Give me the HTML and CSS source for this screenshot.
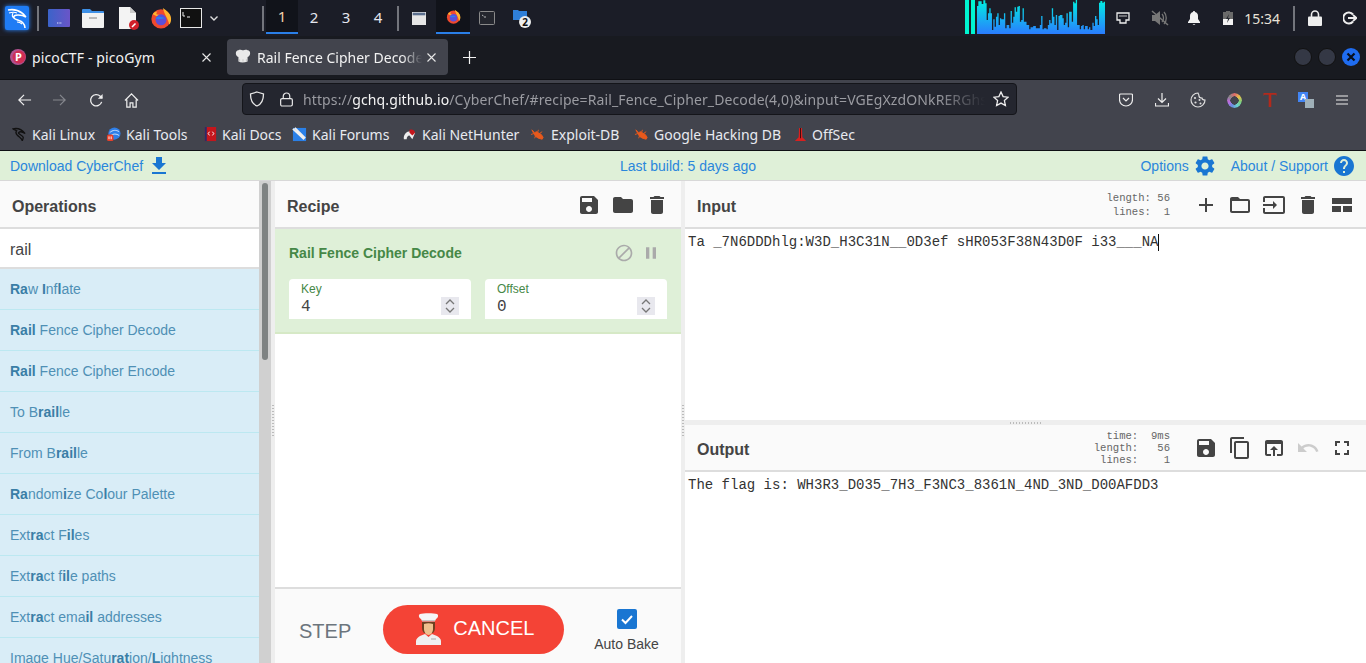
FILE: index.html
```html
<!DOCTYPE html>
<html lang="en">
<head>
    <meta charset="UTF-8">
    <meta name="viewport" content="width=device-width, initial-scale=1.0">
    <title>CyberChef</title>
    <link rel="stylesheet" href="styles.css">
</head>
<body>

<svg class="sprite" aria-hidden="true">
    <symbol id="i-save" viewBox="0 0 24 24"><path d="M17 3H5c-1.11 0-2 .9-2 2v14c0 1.1.89 2 2 2h14c1.1 0 2-.9 2-2V7l-4-4zm-5 16c-1.66 0-3-1.34-3-3s1.34-3 3-3 3 1.34 3 3-1.34 3-3 3zm3-10H5V5h10v4z"/></symbol>
    <symbol id="i-folder" viewBox="0 0 24 24"><path d="M10 4H4c-1.1 0-1.99.9-1.99 2L2 18c0 1.1.9 2 2 2h16c1.1 0 2-.9 2-2V8c0-1.1-.9-2-2-2h-8l-2-2z"/></symbol>
    <symbol id="i-folder-open" viewBox="0 0 24 24"><path d="M20 6h-8l-2-2H4c-1.1 0-1.99.9-1.99 2L2 18c0 1.1.9 2 2 2h16c1.1 0 2-.9 2-2V8c0-1.1-.9-2-2-2zm0 12H4V8h16v10z"/></symbol>
    <symbol id="i-trash" viewBox="0 0 24 24"><path d="M6 19c0 1.1.9 2 2 2h8c1.1 0 2-.9 2-2V7H6v12zM19 4h-3.5l-1-1h-5l-1 1H5v2h14V4z"/></symbol>
    <symbol id="i-add" viewBox="0 0 24 24"><path d="M19 13h-6v6h-2v-6H5v-2h6V5h2v6h6v2z"/></symbol>
    <symbol id="i-input" viewBox="0 0 24 24"><path d="M21 3.01H3c-1.1 0-2 .9-2 2V9h2V4.99h18v14.03H3V15H1v4.01c0 1.1.9 1.98 2 1.98h18c1.1 0 2-.88 2-1.98v-14c0-1.11-.9-2-2-2zM11 16l4-4-4-4v3H1v2h10v3z"/></symbol>
    <symbol id="i-tile" viewBox="0 0 24 24"><path d="M2 5h20v6H2zM2 13h9v6H2zM13 13h9v6h-9z"/></symbol>
    <symbol id="i-copy" viewBox="0 0 24 24"><path d="M16 1H4c-1.1 0-2 .9-2 2v14h2V3h12V1zm3 4H8c-1.1 0-2 .9-2 2v14c0 1.1.9 2 2 2h11c1.1 0 2-.9 2-2V7c0-1.1-.9-2-2-2zm0 16H8V7h11v14z"/></symbol>
    <symbol id="i-open" viewBox="0 0 24 24"><path d="M19 4H5c-1.11 0-2 .9-2 2v12c0 1.1.89 2 2 2h4v-2H5V8h14v10h-4v2h4c1.1 0 2-.9 2-2V6c0-1.1-.89-2-2-2zm-7 6l-4 4h3v6h2v-6h3l-4-4z"/></symbol>
    <symbol id="i-undo" viewBox="0 0 24 24"><path d="M12.5 8c-2.65 0-5.05.99-6.9 2.6L2 7v9h9l-3.62-3.62c1.39-1.16 3.16-1.88 5.12-1.88 3.54 0 6.55 2.31 7.6 5.5l2.37-.78C21.08 11.03 17.15 8 12.5 8z"/></symbol>
    <symbol id="i-full" viewBox="0 0 24 24"><path d="M7 14H5v5h5v-2H7v-3zm-2-4h2V7h3V5H5v5zm12 7h-3v2h5v-5h-2v3zM14 5v2h3v3h2V5h-5z"/></symbol>
    <symbol id="i-gear" viewBox="0 0 24 24"><path d="M19.14 12.94c.04-.3.06-.61.06-.94 0-.32-.02-.64-.07-.94l2.03-1.58c.18-.14.23-.41.12-.61l-1.92-3.32c-.12-.22-.37-.29-.59-.22l-2.39.96c-.5-.38-1.03-.7-1.62-.94l-.36-2.54c-.04-.24-.24-.41-.48-.41h-3.84c-.24 0-.43.17-.47.41l-.36 2.54c-.59.24-1.13.57-1.62.94l-2.39-.96c-.22-.08-.47 0-.59.22L2.74 8.87c-.12.21-.08.47.12.61l2.03 1.58c-.05.3-.09.63-.09.94s.02.64.07.94l-2.03 1.58c-.18.14-.23.41-.12.61l1.92 3.32c.12.22.37.29.59.22l2.39-.96c.5.38 1.03.7 1.62.94l.36 2.54c.05.24.24.41.48.41h3.84c.24 0 .44-.17.47-.41l.36-2.54c.59-.24 1.13-.56 1.62-.94l2.39.96c.22.08.47 0 .59-.22l1.92-3.32c.12-.22.07-.47-.12-.61l-2.01-1.58zM12 15.6c-1.98 0-3.6-1.62-3.6-3.6s1.62-3.6 3.6-3.6 3.6 1.62 3.6 3.6-1.62 3.6-3.6 3.6z"/></symbol>
    <symbol id="i-help" viewBox="0 0 24 24"><path d="M12 2C6.48 2 2 6.48 2 12s4.48 10 10 10 10-4.48 10-10S17.52 2 12 2zm1 17h-2v-2h2v2zm2.07-7.75l-.9.92C13.45 12.9 13 13.5 13 15h-2v-.5c0-1.1.45-2.1 1.17-2.83l1.24-1.26c.37-.36.59-.86.59-1.41 0-1.1-.9-2-2-2s-2 .9-2 2H8c0-2.21 1.79-4 4-4s4 1.79 4 4c0 .88-.36 1.68-.93 2.25z"/></symbol>
    <symbol id="i-download" viewBox="0 0 24 24"><path d="M19 9h-4V3H9v6H5l7 7 7-7zM5 18v2h14v-2H5z"/></symbol>
    <symbol id="i-block" viewBox="0 0 24 24"><path d="M12 2C6.48 2 2 6.48 2 12s4.48 10 10 10 10-4.48 10-10S17.52 2 12 2zM4 12c0-4.42 3.58-8 8-8 1.85 0 3.55.63 4.9 1.69L5.69 16.9C4.63 15.55 4 13.85 4 12zm8 8c-1.85 0-3.55-.63-4.9-1.69L18.31 7.1C19.37 8.45 20 10.15 20 12c0 4.42-3.58 8-8 8z"/></symbol>
    <symbol id="i-pause" viewBox="0 0 24 24"><path d="M6 19h4V5H6v14zm8-14v14h4V5h-4z"/></symbol>
    <symbol id="i-spin" viewBox="0 0 18 18"><path d="M5 7l4-4 4 4M5 11l4 4 4-4" fill="none" stroke="#777" stroke-width="1.3"/></symbol>
    <symbol id="i-tabx" viewBox="0 0 9 9"><path d="M.5.5l8 8M8.500.5l-8 8" stroke="#e8e8e8" stroke-width="1.100"/></symbol>
    <symbol id="i-firefox" viewBox="0 0 24 24">
        <circle cx="12" cy="13" r="10.5" fill="#f0492e"/>
        <path d="M14 1c4 3 9 6 9 12 0 3-1 5-2 6-1-6-5-10-7-18z" fill="#ffb52e"/>
        <path d="M3 8c1-2 3-3 5-3-1 1-1 2-1 3l5 1-3 2-6-3z" fill="#ffb52e"/>
        <circle cx="12" cy="14" r="6" fill="#5c4fd8"/>
        <path d="M6 12c3-2 8-2 11 1-2-1-3 0-5 0s-4 1-6-1z" fill="#2d7ff0"/>
    </symbol>
    <symbol id="i-bug" viewBox="0 0 16 16"><path d="M2 3l3 3 2-1 5 3 2 3-1 2-4-1-3-2-2-3zM1 8l3-1M5 12l1-3M9 3l-1 3M13 5l-3 2" fill="#e8591c" stroke="#e8591c" stroke-width="1"/></symbol>
</svg>

<div class="taskbar">
    <svg class="tb-kali" viewBox="0 0 24 24">
        <rect width="24" height="24" rx="2" fill="#1f7cf5"/>
        <path d="M3 4c5-1 10 0 14 3 2 1 3 3 4 4-3-2-6-2-8-2-3 0-5 1-4 3 1 2 7 2 9 5 1 1 2 3 2 5" fill="none" stroke="#fff" stroke-width="1.600"/>
        <path d="M4 7c3-1 6-1 8 0M17 18c-1-1-3-2-5-2M9 12c-2-1-2-3-1-5" fill="none" stroke="#fff" stroke-width="1.100"/>
    </svg>
    <span class="tb-sep tb-sep1"></span>
    <svg class="tb-desktop" viewBox="0 0 22 18"><defs><linearGradient id="deskgrad" x1="0" x2="1"><stop offset="0" stop-color="#3b63c9"/><stop offset="1" stop-color="#6a55c8"/></linearGradient></defs><rect width="22" height="18" rx="1" fill="url(#deskgrad)"/><path d="M9 14h5" stroke="#dfe4ff" stroke-dasharray="1 .6" stroke-width="1.2"/></svg>
    <svg class="tb-folder" viewBox="0 0 22 20"><path d="M0 2a1 1 0 0 1 1-1h7l2 2h11a1 1 0 0 1 1 1v2H0z" fill="#3d8fe6"/><path d="M0 5h22v14a1 1 0 0 1-1 1H1a1 1 0 0 1-1-1z" fill="#f1f1f1"/><rect x="7" y="9" width="8" height="2" fill="#b9b9b9"/></svg>
    <svg class="tb-doc" viewBox="0 0 21 23"><path d="M1 0h11l6 6v16H1z" fill="#f3f3f3"/><path d="M12 0l6 6h-6z" fill="#c9c9c9"/><circle cx="16" cy="18" r="5" fill="#d1202a"/><path d="M14 20l3.5-3.5" stroke="#fff" stroke-width="1.6"/></svg>
    <svg class="tb-fox"><use href="#i-firefox"/></svg>
    <svg class="tb-term" viewBox="0 0 22 20"><rect x=".5" y=".5" width="21" height="19" fill="#111" stroke="#e8e8e8"/><path d="M3 4v4M3 8h2M7 9h3" stroke="#eee" stroke-width="1"/></svg>
    <svg class="tb-chev" viewBox="0 0 8 5"><path d="M.5.5L4 4 7.5.5" fill="none" stroke="#ddd" stroke-width="1.4"/></svg>
    <span class="tb-sep tb-sep2"></span>
    <div class="workspaces">
        <span class="ws ws-on">1</span>
        <span class="ws">2</span>
        <span class="ws">3</span>
        <span class="ws">4</span>
    </div>
    <span class="tb-sep tb-sep3"></span>
    <svg class="tb-win" viewBox="0 0 14 13"><rect width="14" height="13" fill="#e6e6e6"/><rect x=".7" y=".7" width="12.6" height="2.6" fill="#5b6f8f"/></svg>
    <div class="tb-active"><svg class="tb-fox-sm"><use href="#i-firefox"/></svg></div>
    <svg class="tb-term-sm" viewBox="0 0 16 14"><rect x=".5" y=".5" width="15" height="13" rx="1" fill="#24262e" stroke="#8a8a8a"/><path d="M3 4l1.5 1M5 6h2" stroke="#ddd" stroke-width=".8"/></svg>
    <div class="tb-files">
        <svg viewBox="0 0 14 11"><path d="M0 1h5l1 1h8v9H0z" fill="#2f7fd8"/></svg>
        <span class="tb-badge">2</span>
    </div>

    <div class="tb-right">
        <span class="cpu-bar"></span>
        <span class="cpu-bar"></span>
        <svg class="net-graph" viewBox="51 0 385 102" preserveAspectRatio="none">
            <defs><linearGradient id="netgrad" x1="0" x2="0" y1="0" y2="1"><stop offset="0" stop-color="#00f0e0"/><stop offset="1" stop-color="#2a7cff"/></linearGradient></defs>
            <path fill="url(#netgrad)" d="M51 102V18H55V4H65V12H70V1H76V10H80V60H84V40H88V25H92V40H96V90H100V58H104V80H108V50H112V40H116V75H120V55H124V58H132V40H136V85H140V75H148V85H152V33H156V68H160V50H164V22H168V35H172V20H176V18H180V65H184V60H188V25H192V65H200V75H208V88H212V82H220V78H228V85H240V75H244V48H248V88H252V85H260V88H264V75H268V60H272V70H276V25H280V50H284V75H288V45H292V90H296V48H300V45H308V55H312V75H316V68H320V40H324V82H328V35H336V65H340V5H344V10H348V0H352V75H360V88H364V78H368V75H372V88H376V78H384V88H388V82H392V90H398V68H402V78H406V48H410V58H414V75H418V8H422V3H428V8H432V5H436V102Z"/>
        </svg>
        <svg class="tr-eth" viewBox="0 0 14 12"><path d="M1 1h12v7h-3v3H4V8H1z" fill="none" stroke="#eee" stroke-width="1.3"/><path d="M4 3v2M6 3v2M8 3v2M10 3v2" stroke="#eee" stroke-width=".8"/></svg>
        <svg class="tr-mute" viewBox="0 0 18 16"><path d="M1 5h3l5-4v14l-5-4H1z" fill="#777"/><path d="M11 4c2 2 2 6 0 8M13 2c3 3 3 9 0 12" fill="none" stroke="#777" stroke-width="1.3"/><path d="M1 1l16 14" stroke="#777" stroke-width="1.5"/></svg>
        <svg class="tr-bell" viewBox="0 0 14 14"><path d="M7 0c.8 0 1 .5 1 1 2 .5 3 2 3 4v3l2 3v1H1v-1l2-3V5c0-2 1-3.500 3-4 0-.5.2-1 1-1z" fill="#f2f2f2"/><path d="M5.500 13h3L7 14z" fill="#f2f2f2"/></svg>
        <svg class="tr-batt" viewBox="0 0 10 14"><path d="M3 0h4v1h3v13H0V1h3z" fill="#6a6a6a"/><path d="M0 8h10v6H0z" fill="#f2f2f2"/><path d="M6 3L3 8h2l-1 4 3-5H5z" fill="#26282f"/></svg>
        <span class="clock">15:34</span>
        <span class="tb-sep tb-sep4"></span>
        <svg class="tr-lock" viewBox="0 0 14 16"><path d="M3.500 7V4.500a3.500 3.500 0 0 1 7 0V7" fill="none" stroke="#eee" stroke-width="1.600"/><rect y="6.500" width="14" height="9.500" rx="1" fill="#eee"/></svg>
        <svg class="tr-exit" viewBox="0 0 14 14"><path d="M10 3.500A5.500 5.500 0 1 0 10 10.500" fill="none" stroke="#eee" stroke-width="2"/><path d="M5 7h8M10 4l3.500 3L10 10" fill="none" stroke="#eee" stroke-width="1.800"/></svg>
    </div>
</div>

<div class="tabbar">
    <div class="tab">
        <svg class="tab-icon" viewBox="0 0 16 16"><circle cx="8" cy="8" r="8" fill="#b0508e"/><circle cx="9" cy="8" r="6.500" fill="#cf2f55"/><text x="8.500" y="12" class="tab-p">P</text></svg>
        <span class="tab-title">picoCTF - picoGym</span>
        <svg class="tab-x"><use href="#i-tabx"/></svg>
    </div>
    <div class="tab tab-on">
        <svg class="tab-icon" viewBox="0 0 14 14"><path d="M3 1c1-1 3 0 4 0s3-1 4 0c3 0 3 5 0 6v4c-3 1-6 1-8 0V7C0 6 0 1 3 1z" fill="#e9e9e9"/><path d="M4 9v2M7 9v2M10 9v2" stroke="#bbb" stroke-width=".7"/></svg>
        <span class="tab-title tab-fade">Rail Fence Cipher Decoder</span>
        <svg class="tab-x"><use href="#i-tabx"/></svg>
    </div>
    <svg class="tab-new" viewBox="0 0 13 13"><path d="M6.500 0v13M0 6.500h13" stroke="#f2f2f2" stroke-width="1.200"/></svg>
    <div class="win-btns">
        <span class="win-btn"></span>
        <span class="win-btn"></span>
        <span class="win-btn win-close">
            <svg viewBox="0 0 10 10"><path d="M1.500 1.500l7 7M8.500 1.500l-7 7" stroke="#08101f" stroke-width="2.200"/></svg>
        </span>
    </div>
</div>

<div class="toolbar">
    <svg class="nav nav-back" viewBox="0 0 16 14"><path d="M15 7H2M7.500 1.500L2 7l5.500 5.500" fill="none" stroke="#eee" stroke-width="1.300"/></svg>
    <svg class="nav nav-fwd" viewBox="0 0 16 14"><path d="M1 7h13M8.500 1.500L14 7l-5.500 5.500" fill="none" stroke="#85878d" stroke-width="1.300"/></svg>
    <svg class="nav nav-reload" viewBox="0 0 16 16"><path d="M13.500 9.500A6 6 0 1 1 12 3.500l2 2" fill="none" stroke="#eee" stroke-width="1.400"/><path d="M14.500 1v5h-5z" fill="#eee"/></svg>
    <svg class="nav nav-home" viewBox="0 0 16 16"><path d="M1 8l7-7 7 7M3 7v8h3.500v-4.500h3V15H13V7" fill="none" stroke="#eee" stroke-width="1.300"/></svg>
    <div class="urlbar">
        <svg class="url-shield" viewBox="0 0 16 16"><path d="M8 1l6.500 2c0 6-1.500 10-6.500 12C3 13 1.500 9 1.500 3z" fill="none" stroke="#e8e8e8" stroke-width="1.300"/></svg>
        <svg class="url-lock" viewBox="0 0 14 16"><path d="M3.500 7V4.500a3.500 3.500 0 0 1 7 0V7" fill="none" stroke="#e8e8e8" stroke-width="1.300"/><rect x=".7" y="7" width="12.600" height="8" rx="1.500" fill="none" stroke="#e8e8e8" stroke-width="1.300"/></svg>
        <span class="url-text">https://<b>gchq.github.io</b>/CyberChef/#recipe=Rail_Fence_Cipher_Decode(4,0)&amp;input=VGEgXzdONkRERGhsZzpX</span>
        <svg class="url-star" viewBox="0 0 16 16"><path d="M8 1l2.100 4.600 5 .6-3.700 3.400 1 5L8 12.100 3.600 14.600l1-5L.9 6.200l5-.6z" fill="none" stroke="#eee" stroke-width="1.300"/></svg>
    </div>
    <div class="tool-icons">
        <svg class="ti-pocket" viewBox="0 0 14 14"><path d="M1.500 1h11a1 1 0 0 1 1 1v4.500a6.500 6.500 0 0 1-13 0V2a1 1 0 0 1 1-1z" fill="none" stroke="#eee" stroke-width="1.200"/><path d="M4 5l3 3 3-3" fill="none" stroke="#eee" stroke-width="1.200"/></svg>
        <svg class="ti-dl" viewBox="0 0 14 14"><path d="M7 0v9M3 5.500L7 9.500l4-4M.5 10v3h13v-3" fill="none" stroke="#eee" stroke-width="1.200"/></svg>
        <svg class="ti-cookie" viewBox="0 0 16 16"><path d="M8 1a7 7 0 1 0 7 7c-2 0-3-1-3-2-2 0-3-1-3-2 0-1-.500-2-1-3z" fill="none" stroke="#ddd" stroke-width="1.200"/><circle cx="5" cy="6" r="1.100" fill="#ddd"/><circle cx="5.500" cy="10.500" r="1.100" fill="#ddd"/><circle cx="9.500" cy="8" r="1" fill="#ddd"/><circle cx="10.500" cy="11.500" r="1" fill="#ddd"/></svg>
        <span class="ti-ring"></span>
        <svg class="ti-t" viewBox="0 0 14 16"><path d="M.5 1h13v3l-1-1.300H8.300V15H5.700V2.700H1.500L.5 4z" fill="#b22a1c"/></svg>
        <span class="ti-trans">
            <span class="ti-trans-a">A</span>
            <span class="ti-trans-b"></span>
        </span>
        <svg class="ti-menu" viewBox="0 0 12 10"><path d="M0 1h12M0 5h12M0 9h12" stroke="#eee" stroke-width="1.200"/></svg>
    </div>
</div>

<div class="bookmarks">
    <div class="bm"><svg class="bm-icon" viewBox="0 0 16 16"><path d="M1 2c4-1 9 0 13 5-3-2-6-2-7-1s4 3 5 5c0 2-1 3-1 4 0-3-3-4-5-6S4 5 5 4C3 3 2 3 1 2z" fill="none" stroke="#111" stroke-width="1.400"/></svg>Kali Linux</div>
    <div class="bm"><svg class="bm-icon" viewBox="0 0 16 16"><circle cx="9" cy="7" r="6.500" fill="#2f7fe8"/><path d="M4 6c3-3 7-3 10-1M5 9c3-2 6-2 9 0" stroke="#cfe4ff" fill="none"/><rect x="1" y="8" width="7" height="7" rx="2" fill="#e8402a"/><path d="M3.200 10v3M5.500 10v3" stroke="#fff"/></svg>Kali Tools</div>
    <div class="bm bm-tight"><svg class="bm-icon" viewBox="0 0 14 16"><rect x="1" width="12" height="15" fill="#c4161c"/><rect x="1" width="2" height="15" fill="#2b2b6b"/><path d="M6 5L4.500 7 6 9M9 5l1.500 2L9 9" stroke="#fff" fill="none"/></svg>Kali Docs</div>
    <div class="bm"><svg class="bm-icon" viewBox="0 0 16 16"><path d="M1 1h14v14H1z" fill="#2a80e8"/><path d="M1 2l12 11M3 1l11 11" stroke="#eee" stroke-width="2"/></svg>Kali Forums</div>
    <div class="bm"><svg class="bm-icon" viewBox="0 0 16 16"><path d="M2 13C1 6 8 2 14 6L11 13 8 9c-2 0-3 2-3 4z" fill="#eee"/><path d="M8 3c3-1 5 0 6 3l-3 3-3-3z" fill="#c4161c"/></svg>Kali NetHunter</div>
    <div class="bm bm-wide"><svg class="bm-icon"><use href="#i-bug"/></svg>Exploit-DB</div>
    <div class="bm"><svg class="bm-icon"><use href="#i-bug"/></svg>Google Hacking DB</div>
    <div class="bm bm-tight"><svg class="bm-icon" viewBox="0 0 14 16"><path d="M5.500 1h3l.5 10 4 4H1l4-4z" fill="#d8201f"/><path d="M6.500 1h1v11h-1z" fill="#3a0a0a"/></svg>OffSec</div>
</div>

<div class="banner">
    <a class="banner-left">Download CyberChef <svg class="ic-banner-dl"><use href="#i-download"/></svg></a>
    <span class="banner-mid">Last build: 5 days ago</span>
    <div class="banner-right">
        <a>Options <svg class="ic-banner"><use href="#i-gear"/></svg></a>
        <a>About / Support <svg class="ic-banner"><use href="#i-help"/></svg></a>
    </div>
</div>

<div class="workspace">
    <div class="ops">
        <div class="ops-inner">
            <div class="pane-head"><span class="pane-title">Operations</span></div>
            <div class="search">rail</div>
            <ul class="op-list">
                <li><b>Ra</b>w <b>I</b>nf<b>l</b>ate</li>
                <li><b>Rail</b> Fence Cipher Decode</li>
                <li><b>Rail</b> Fence Cipher Encode</li>
                <li>To B<b>rail</b>le</li>
                <li>From B<b>rail</b>le</li>
                <li><b>Ra</b>ndom<b>i</b>ze Co<b>l</b>our Palette</li>
                <li>Ext<b>ra</b>ct F<b>il</b>es</li>
                <li>Ext<b>ra</b>ct f<b>il</b>e paths</li>
                <li>Ext<b>ra</b>ct ema<b>il</b> addresses</li>
                <li>Image Hue/Satu<b>rat</b>ion/<b>L</b>ightness</li>
            </ul>
        </div>
        <div class="scrollbar"><span class="thumb"></span></div>
    </div>
    <div class="gutter-v"><span class="dots-v"></span></div>

    <div class="recipe">
        <div class="pane-head">
            <span class="pane-title">Recipe</span>
            <div class="head-icons">
                <svg class="hi"><use href="#i-save"/></svg>
                <svg class="hi"><use href="#i-folder"/></svg>
                <svg class="hi"><use href="#i-trash"/></svg>
            </div>
        </div>
        <div class="op-card">
            <div class="card-top">
                <span class="card-title">Rail Fence Cipher Decode</span>
                <svg class="card-ic"><use href="#i-block"/></svg>
                <svg class="card-ic card-pause"><use href="#i-pause"/></svg>
            </div>
            <div class="card-fields">
                <div class="field">
                    <label>Key</label>
                    <div class="field-val">4</div>
                    <svg class="spin"><use href="#i-spin"/></svg>
                </div>
                <div class="field">
                    <label>Offset</label>
                    <div class="field-val">0</div>
                    <svg class="spin"><use href="#i-spin"/></svg>
                </div>
            </div>
        </div>
        <div class="recipe-empty"></div>
        <div class="bake">
            <span class="step">STEP</span>
            <div class="cancel">
                <svg class="chef" viewBox="0 0 25 32">
                    <path d="M4 1c3-1 14-1 17 0 2 1 1 4-1 5l-1 2H6L5 6C3 5 2 2 4 1z" fill="#f6f6f6"/>
                    <path d="M6 7h13v1.500H6z" fill="#c8c8c8"/>
                    <path d="M6 9h13v6c0 2-1 4-2 5H8c-1-1-2-3-2-5z" fill="#6e4020"/>
                    <path d="M8 11c3-1 6-1 9 0v5c0 3-2 6-4.500 6S8 19 8 16z" fill="#eec08e"/>
                    <path d="M9 21l3.500 3 3.500-3 5 2c2 1 4 3 4 5v4H0v-4c0-2 2-4 4-5z" fill="#f0f0f0"/>
                    <path d="M15 26h5" stroke="#aaa"/>
                </svg>
                <span>CANCEL</span>
            </div>
            <div class="autobake">
                <span class="check"><svg viewBox="0 0 20 20"><path d="M5 10.500l3.500 3.500L15 7" fill="none" stroke="#fff" stroke-width="2"/></svg></span>
                <span class="autobake-label">Auto Bake</span>
            </div>
        </div>
    </div>
    <div class="gutter-v"><span class="dots-v"></span></div>

    <div class="io">
        <div class="io-pane io-pane-in">
            <div class="pane-head">
                <span class="pane-title">Input</span>
                <pre class="stats">length: 56
 lines:  1</pre>
                <div class="head-icons head-icons-io">
                    <svg class="hi"><use href="#i-add"/></svg>
                    <svg class="hi"><use href="#i-folder-open"/></svg>
                    <svg class="hi"><use href="#i-input"/></svg>
                    <svg class="hi"><use href="#i-trash"/></svg>
                    <svg class="hi"><use href="#i-tile"/></svg>
                </div>
            </div>
            <div class="io-text">Ta _7N6DDDhlg:W3D_H3C31N__0D3ef sHR053F38N43D0F i33___NA<span class="caret"></span></div>
        </div>
        <div class="gutter-h"><span class="dots-h"></span></div>
        <div class="io-pane">
            <div class="pane-head pane-head-out">
                <span class="pane-title">Output</span>
                <pre class="stats stats-out">  time:  9ms
length:   56
 lines:    1</pre>
                <div class="head-icons head-icons-io">
                    <svg class="hi"><use href="#i-save"/></svg>
                    <svg class="hi"><use href="#i-copy"/></svg>
                    <svg class="hi"><use href="#i-open"/></svg>
                    <svg class="hi hi-off"><use href="#i-undo"/></svg>
                    <svg class="hi"><use href="#i-full"/></svg>
                </div>
            </div>
            <div class="io-text">The flag is: WH3R3_D035_7H3_F3NC3_8361N_4ND_3ND_D00AFDD3</div>
        </div>
    </div>
</div>

</body>
</html>
```

FILE: styles.css
```css
* {
    box-sizing: border-box;
}

html, body {
    margin: 0;
    height: 663px;
    overflow: hidden;
}

body {
    font-family: "Liberation Sans", Arial, sans-serif;
    background-color: #fff;
    color: #444;
}

.sprite {
    display: none;
}

/* desktop panel */
.taskbar {
    height: 36px;
    display: flex;
    align-items: center;
    background-color: #1b1d27;
    font-family: "Noto Sans", sans-serif;
}

.taskbar svg {
    flex: none;
}

.tb-kali { width: 24px; height: 24px; margin-left: 5px; filter: drop-shadow(0 0 2px #2a86ff); }
.tb-sep { width: 2px; height: 25px; background-color: #73757c; flex: none; }
.tb-sep1 { margin-left: 8px; }
.tb-desktop { width: 22px; height: 18px; margin-left: 9px; }
.tb-folder { width: 22px; height: 20px; margin-left: 12px; }
.tb-doc { width: 21px; height: 23px; margin-left: 14px; }
.tb-fox { width: 22px; height: 22px; margin-left: 11px; }
.tb-term { width: 22px; height: 20px; margin-left: 8px; }
.tb-chev { width: 8px; height: 5px; margin-left: 8px; }
.tb-sep2 { margin-left: 44px; }

.workspaces {
    display: flex;
    margin-left: 2px;
    height: 36px;
}

.ws {
    width: 32px;
    height: 34px;
    display: flex;
    align-items: center;
    justify-content: center;
    font-size: 15px;
    color: #e4e6ee;
}

.ws-on {
    background-color: #11131a;
    border-bottom: 2px solid #2a7fe8;
    color: #f2d3ad;
}

.tb-sep3 { margin-left: 3px; }
.tb-win { width: 14px; height: 13px; margin-left: 13px; }

.tb-active {
    width: 34px;
    height: 34px;
    margin: 0 0 2px 10px;
    display: flex;
    align-items: center;
    justify-content: center;
    background-color: #11131a;
    border-bottom: 2px solid #2a7fe8;
}

.tb-fox-sm { width: 15px; height: 15px; }
.tb-term-sm { width: 16px; height: 14px; margin-left: 9px; }

.tb-files {
    position: relative;
    margin-left: 18px;
    width: 18px;
    height: 19px;
}

.tb-files svg {
    width: 14px;
    height: 11px;
    display: block;
}

.tb-badge {
    position: absolute;
    right: 0;
    bottom: 0;
    width: 12px;
    height: 12px;
    border-radius: 50%;
    background-color: #eee;
    color: #111;
    font-size: 10px;
    font-weight: 700;
    line-height: 12px;
    text-align: center;
}

.tb-right {
    margin-left: auto;
    display: flex;
    align-items: center;
    height: 36px;
}

.cpu-bar {
    width: 4px;
    height: 34px;
    margin-right: 2px;
    margin-bottom: 2px;
    background-color: #00f5d0;
}

.net-graph { width: 128px; height: 34px; margin-bottom: 2px; }
.tr-eth { width: 14px; height: 12px; margin-left: 11px; }
.tr-mute { width: 18px; height: 16px; margin-left: 21px; }
.tr-bell { width: 14px; height: 14px; margin-left: 18px; }
.tr-batt { width: 10px; height: 14px; margin-left: 22px; }
.clock { margin-left: 11px; font-size: 14px; color: #e8e2d8; }
.tb-sep4 { margin-left: 13px; }
.tr-lock { width: 14px; height: 16px; margin-left: 13px; }
.tr-exit { width: 14px; height: 14px; margin: 0 9px 0 21px; }

/* browser tabs */
.tabbar {
    height: 43px;
    display: flex;
    align-items: flex-start;
    padding-top: 3px;
    background-color: #181a20;
    font-family: "Noto Sans", sans-serif;
    font-size: 14px;
    letter-spacing: .12px;
    color: #f2f2f2;
}

.tab {
    width: 221px;
    height: 36px;
    display: flex;
    align-items: center;
    padding-left: 10px;
    border-radius: 4px;
    position: relative;
}

.tab:first-child {
    width: 219px;
    margin-right: 8px;
}

.tab-on {
    background-color: #42444d;
    padding-left: 8px;
}

.tab-icon {
    width: 16px;
    height: 16px;
    flex: none;
}

.tab-title {
    margin-left: 6px;
    white-space: nowrap;
    overflow: hidden;
}

.tab-fade {
    width: 165px;
    letter-spacing: 0;
    -webkit-mask-image: linear-gradient(to right, #000 88%, transparent);
    mask-image: linear-gradient(to right, #000 88%, transparent);
}

.tab-p {
    font-family: "Noto Sans", sans-serif;
    font-size: 11px;
    font-weight: 700;
    fill: #fff;
    text-anchor: middle;
}

.tab-x {
    position: absolute;
    right: 12px;
    top: 14px;
    width: 9px;
    height: 9px;
}

.tab:first-child .tab-x {
    right: 8px;
}

.tab-new {
    width: 13px;
    height: 13px;
    margin: 12px 0 0 15px;
}

.win-btns {
    margin-left: auto;
    margin-right: 6px;
    margin-top: 9px;
    display: flex;
    gap: 6px;
}

.win-btn {
    width: 18px;
    height: 18px;
    border-radius: 50%;
    background-color: #343845;
    border: 1px solid #111;
    display: flex;
    align-items: center;
    justify-content: center;
}

.win-close {
    background-color: #1f6cf0;
    border: none;
}

.win-close svg {
    width: 10px;
    height: 10px;
}

/* browser toolbar */
.toolbar {
    height: 41px;
    display: flex;
    align-items: center;
    background-color: #42444d;
    border-top: 1px solid #0f1014;
    font-family: "Noto Sans", sans-serif;
}

.nav { flex: none; }
.nav-back { width: 15px; height: 14px; margin-left: 17px; }
.nav-fwd { width: 15px; height: 14px; margin-left: 20px; }
.nav-reload { width: 15px; height: 15px; margin-left: 22px; }
.nav-home { width: 15px; height: 15px; margin-left: 20px; }

.urlbar {
    width: 775px;
    height: 32px;
    margin: 0 0 2px 103px;
    display: flex;
    align-items: center;
    background-color: #24262f;
    border: 1px solid #14151a;
    border-radius: 4px;
    font-size: 14px;
    letter-spacing: .12px;
    color: #9a9ba1;
}

.url-shield { width: 16px; height: 16px; margin-left: 6px; flex: none; }
.url-lock { width: 13px; height: 15px; margin-left: 15px; flex: none; }

.url-text {
    width: 682px;
    margin-left: 10px;
    white-space: nowrap;
    overflow: hidden;
    flex: none;
    -webkit-mask-image: linear-gradient(to right, #000 93%, transparent);
    mask-image: linear-gradient(to right, #000 93%, transparent);
}

.url-text b {
    font-weight: 400;
    color: #f4f4f4;
}

.url-star { width: 16px; height: 16px; margin-left: 8px; flex: none; }

.tool-icons {
    display: flex;
    align-items: center;
    margin-left: 102px;
}

.ti-pocket { width: 14px; height: 14px; }
.ti-dl { width: 14px; height: 14px; margin-left: 22px; }
.ti-cookie { width: 16px; height: 16px; margin-left: 21px; }

.ti-ring {
    width: 15px;
    height: 15px;
    margin-left: 21px;
    border-radius: 50%;
    background: conic-gradient(#e06a6a, #e6c04a, #7ed07e, #6ad0d0, #6a8ae0, #c06ae0, #888, #e06a6a);
    -webkit-mask-image: radial-gradient(circle, transparent 38%, #000 40%);
    mask-image: radial-gradient(circle, transparent 38%, #000 40%);
}

.ti-t { width: 14px; height: 16px; margin-left: 21px; }

.ti-trans {
    position: relative;
    width: 16px;
    height: 16px;
    margin-left: 21px;
}

.ti-trans-a {
    position: absolute;
    left: 0;
    top: 0;
    width: 10px;
    height: 10px;
    background-color: #4285f4;
    color: #fff;
    font-size: 9px;
    font-weight: 700;
    line-height: 10px;
    text-align: center;
}

.ti-trans-b {
    position: absolute;
    right: 0;
    bottom: 0;
    width: 9px;
    height: 9px;
    background-color: #9fb0b8;
}

.ti-menu { width: 12px; height: 10px; margin-left: 22px; }

/* bookmarks */
.bookmarks {
    height: 31px;
    display: grid;
    grid-template-columns: 94px 97px 89px 110px 128px 104px 159px auto;
    align-items: center;
    padding-left: 12px;
    padding-bottom: 1px;
    background-color: #42444d;
    font-family: "Noto Sans", sans-serif;
    font-size: 14px;
    color: #e8eaf0;
    border-bottom: 1px solid #0f1014;
}

.bm {
    display: flex;
    align-items: center;
    gap: 5px;
    white-space: nowrap;
}

.bm-tight { gap: 4px; }
.bm-wide { gap: 6px; }
.bm-icon { width: 15px; height: 15px; flex: none; }

/* cyberchef banner */
.banner {
    height: 30px;
    display: grid;
    grid-template-columns: 1fr auto 1fr;
    align-items: center;
    padding: 0 12px 0 10px;
    background-color: #dff0d8;
    border-bottom: 1px solid #d8d8d8;
    font-size: 14px;
    color: #2a86dc;
}

.banner a {
    display: flex;
    align-items: center;
    gap: 6px;
}

.banner .banner-left { gap: 4px; }
.banner-mid { margin-left: 12px; }

.banner-right {
    display: flex;
    justify-content: flex-end;
    gap: 16px;
}

.ic-banner, .ic-banner-dl {
    width: 24px;
    height: 24px;
    fill: #1976d2;
    margin: -3px -2px;
}

.ic-banner-dl {
    margin: -3px 0;
}

.workspace {
    height: 482px;
    display: grid;
    grid-template-columns: 271px 4px 406px 4px 1fr;
}

.pane-head {
    height: 48px;
    display: flex;
    align-items: center;
    padding: 2px 12px 0;
    background-color: #fafafa;
    border-bottom: 2px solid #ddd;
    font-size: 16px;
    font-weight: 700;
    color: #444;
}

.pane-head-out {
    height: 47px;
    padding-top: 0;
}

.pane-title {
    margin-top: 4px;
}

/* operations column */
.ops {
    display: flex;
    overflow: hidden;
}

.ops-inner {
    width: 259px;
    flex: none;
}

.search {
    height: 40px;
    padding: 12px 10px 0;
    border-bottom: 2px solid #ddd;
    font-size: 16px;
    color: #444;
}

.op-list {
    list-style: none;
    margin: 0;
    padding: 0;
}

.op-list li {
    height: 41px;
    padding: 12px 10px 0;
    background-color: #d9edf7;
    border-bottom: 1px solid #bce8f1;
    font-size: 14px;
    color: #4f90b5;
    white-space: nowrap;
}

.op-list b {
    color: #3a7ea6;
}

.scrollbar {
    width: 12px;
    background-color: #d0d0d0;
    padding: 2px 3px;
}

.thumb {
    display: block;
    width: 6px;
    height: 177px;
    border-radius: 3px;
    background-color: #7f8383;
}

.gutter-v {
    background-color: #eee;
    display: flex;
    align-items: center;
    justify-content: center;
    padding-bottom: 2px;
}

.dots-v {
    width: 2px;
    height: 32px;
    background-image: repeating-linear-gradient(to bottom, #bbb 0 1px, transparent 1px 3px);
}

/* recipe column */
.recipe {
    display: flex;
    flex-direction: column;
    min-width: 0;
}

.head-icons {
    margin-left: auto;
    display: flex;
    gap: 10px;
}

.hi {
    width: 24px;
    height: 24px;
    fill: #444;
}

.hi-off {
    fill: #ccc;
}

.op-card {
    height: 105px;
    padding: 14px 14px 0;
    background-color: #dff0d8;
    border-bottom: 2px solid #d6e9c6;
}

.card-top {
    height: 36px;
    display: flex;
    align-items: flex-start;
}

.card-title {
    flex: 1;
    font-size: 14px;
    font-weight: 700;
    line-height: 20px;
    color: #468847;
}

.card-ic {
    width: 20px;
    height: 20px;
    fill: #aaa;
    flex: none;
}

.card-pause {
    margin: 0 6px 0 7px;
}

.card-fields {
    display: grid;
    grid-template-columns: 182px 182px;
    gap: 14px;
}

.field {
    height: 40px;
    position: relative;
    padding: 3px 12px 0;
    background-color: #fff;
    border-radius: 4px 4px 0 0;
    color: #444;
}

.field label {
    display: block;
    font-size: 12px;
    line-height: 14px;
    color: #468847;
}

.field-val {
    margin-top: 2px;
    font-family: "Liberation Mono", monospace;
    font-size: 16px;
    line-height: 18px;
}

.spin {
    position: absolute;
    right: 12px;
    top: 18px;
    width: 18px;
    height: 18px;
    background-color: #e8e8ee;
}

.recipe-empty {
    flex: 1;
    background-color: #fff;
    border-bottom: 2px solid #ddd;
}

.bake {
    height: 74px;
    display: flex;
    align-items: flex-start;
    background-color: #fafafa;
}

.step {
    margin: 31px 0 0 24px;
    font-size: 20px;
    color: #6c757d;
}

.cancel {
    width: 181px;
    height: 49px;
    margin: 16px 0 0 32px;
    padding: 0 0 3px 33px;
    display: flex;
    align-items: center;
    gap: 12px;
    border-radius: 25px;
    background-color: #f44336;
    color: #fff;
    font-size: 20px;
}

.chef {
    width: 25px;
    height: 32px;
    flex: none;
    margin-top: 2px;
}

.autobake {
    margin: 20px 0 0 30px;
    display: flex;
    flex-direction: column;
    align-items: center;
    gap: 7px;
    font-size: 14px;
    color: #444;
}

.check {
    width: 20px;
    height: 20px;
    background-color: #1976d2;
    border-radius: 2px;
}

.check svg {
    display: block;
}

.autobake-label {
    line-height: 16px;
}

/* input and output */
.io {
    display: flex;
    flex-direction: column;
    min-width: 0;
}

.io-pane {
    flex: 1;
    min-height: 0;
    background-color: #fff;
}

.io-pane-in {
    flex: none;
    height: 239px;
}

.stats {
    margin: 0 0 0 auto;
    font-family: "Liberation Mono", monospace;
    font-size: 10.6px;
    font-weight: 400;
    line-height: 14px;
    color: #666;
}

.stats-out {
    line-height: 12px;
}

.head-icons-io {
    margin-left: 24px;
}

.io-text {
    padding: 5px 3px 0;
    font-family: "Liberation Mono", monospace;
    font-size: 14px;
    line-height: 17px;
    color: #333;
    white-space: pre;
}

.caret {
    display: inline-block;
    width: 1px;
    height: 17px;
    background-color: #111;
    vertical-align: top;
}

.gutter-h {
    height: 5px;
    flex: none;
    background-color: #eee;
    display: flex;
    align-items: center;
    justify-content: center;
}

.dots-h {
    width: 32px;
    height: 2px;
    background-image: repeating-linear-gradient(to right, #bbb 0 1px, transparent 1px 3px);
}
```
